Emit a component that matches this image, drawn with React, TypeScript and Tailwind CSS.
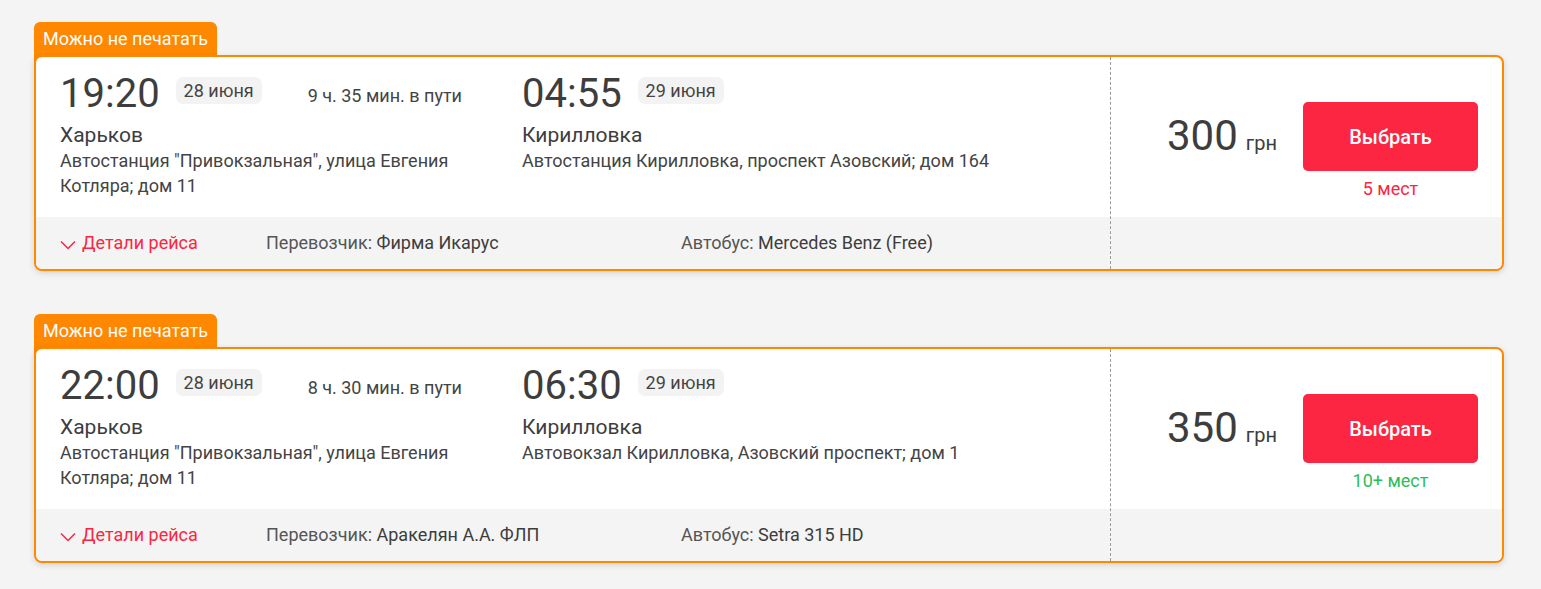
import React from "react";

type Trip = {
  depTime: string;
  depDate: string;
  duration: string;
  depCity: string;
  depAddress: string;
  arrTime: string;
  arrDate: string;
  arrCity: string;
  arrAddress: string;
  carrier: string;
  bus: string;
  price: string;
  seats: string;
  seatsColor: string;
};

const trips: Trip[] = [
  {
    depTime: "19:20",
    depDate: "28 июня",
    duration: "9 ч. 35 мин. в пути",
    depCity: "Харьков",
    depAddress: 'Автостанция "Привокзальная", улица Евгения Котляра; дом 11',
    arrTime: "04:55",
    arrDate: "29 июня",
    arrCity: "Кирилловка",
    arrAddress: "Автостанция Кирилловка, проспект Азовский; дом 164",
    carrier: "Фирма Икарус",
    bus: "Mercedes Benz (Free)",
    price: "300",
    seats: "5 мест",
    seatsColor: "text-[#fc2542]",
  },
  {
    depTime: "22:00",
    depDate: "28 июня",
    duration: "8 ч. 30 мин. в пути",
    depCity: "Харьков",
    depAddress: 'Автостанция "Привокзальная", улица Евгения Котляра; дом 11',
    arrTime: "06:30",
    arrDate: "29 июня",
    arrCity: "Кирилловка",
    arrAddress: "Автовокзал Кирилловка, Азовский проспект; дом 1",
    carrier: "Аракелян А.А. ФЛП",
    bus: "Setra 315 HD",
    price: "350",
    seats: "10+ мест",
    seatsColor: "text-[#2dbd57]",
  },
];

function DateBadge({ children }: { children: React.ReactNode }) {
  return (
    <span className="ml-[16px] mt-[7px] h-[27px] self-start rounded-[7px] bg-[#f3f3f3] px-2 text-[18px] leading-[27px] text-[#444]">
      {children}
    </span>
  );
}

function TripCard({ trip }: { trip: Trip }) {
  return (
    <div className="mb-[43px] w-[1470px]">
      <div className="-mb-[8px] inline-block h-[41px] rounded-t-[6px] bg-[#ff8800] px-[9px] text-[18px] leading-[33px] text-white">
        Можно не печатать
      </div>
      <div className="relative flex overflow-hidden rounded-[8px] border-2 border-[#ff8800] bg-white shadow-[0_2px_6px_rgba(0,0,0,0.14)]">
        {/* left: route info */}
        <div className="flex w-[1074px] flex-col">
          <div className="flex h-[160px] pl-[24px] pt-[13px]">
            <div className="w-[462px] pr-[20px]">
              <div className="flex h-[48px]">
                <span className="text-[40px] leading-[48px] text-[#3d3d3d]">{trip.depTime}</span>
                <DateBadge>{trip.depDate}</DateBadge>
                <span className="ml-[46px] mt-[16px] self-start text-[18px] leading-[20px] text-[#444]">
                  {trip.duration}
                </span>
              </div>
              <div className="mt-[5px] text-[21px] leading-[25px] text-[#3d3d3d]">{trip.depCity}</div>
              <div className="text-[18px] leading-[25px] text-[#444]">{trip.depAddress}</div>
            </div>
            <div className="flex-1">
              <div className="flex h-[48px]">
                <span className="text-[40px] leading-[48px] text-[#3d3d3d]">{trip.arrTime}</span>
                <DateBadge>{trip.arrDate}</DateBadge>
              </div>
              <div className="mt-[5px] text-[21px] leading-[25px] text-[#3d3d3d]">{trip.arrCity}</div>
              <div className="text-[18px] leading-[25px] text-[#444]">{trip.arrAddress}</div>
            </div>
          </div>
          <div className="flex h-[52px] items-center bg-[#f4f4f4] pb-[1px] pl-[24px] text-[18px] text-[#444]">
            <button className="flex w-[206px] items-center text-[#fc2542]">
              <svg width="16" height="10" viewBox="0 0 16 10" fill="none" className="mt-[4px]">
                <polyline points="1,1.5 8,8.5 15,1.5" stroke="#fc2542" strokeWidth="1.5" />
              </svg>
              <span className="ml-[6px]">Детали рейса</span>
            </button>
            <div className="w-[415px]">
              <span className="text-[#555]">Перевозчик: </span>
              <span className="text-[#3d3d3d]">{trip.carrier}</span>
            </div>
            <div>
              <span className="text-[#555]">Автобус: </span>
              <span className="text-[#3d3d3d]">{trip.bus}</span>
            </div>
          </div>
        </div>
        {/* right: price */}
        <div className="flex flex-1 flex-col border-l border-dashed border-[#999]">
          <div className="flex h-[160px] justify-end pr-[24px] pt-[45px]">
            <div className="mr-[26px] mt-[10px] leading-[48px] text-[#3d3d3d]">
              <span className="text-[42px]">{trip.price}</span>
              <span className="ml-[8px] text-[20px]">грн</span>
            </div>
            <div className="flex flex-col items-center">
              <button className="h-[69px] w-[175px] rounded-[5px] bg-[#fc2542] text-[20px] font-medium text-white">
                Выбрать
              </button>
              <span className={`mt-[8px] text-[18px] leading-[20px] ${trip.seatsColor}`}>{trip.seats}</span>
            </div>
          </div>
          <div className="flex-1 bg-[#f4f4f4]" />
        </div>
      </div>
    </div>
  );
}

export default function App() {
  return (
    <div
      className="min-h-screen bg-[#f4f4f4] pl-[34px] pt-[22px]"
      style={{ fontFamily: "Roboto, 'Noto Sans', sans-serif" }}
    >
      {trips.map((trip, i) => (
        <TripCard key={i} trip={trip} />
      ))}
    </div>
  );
}
